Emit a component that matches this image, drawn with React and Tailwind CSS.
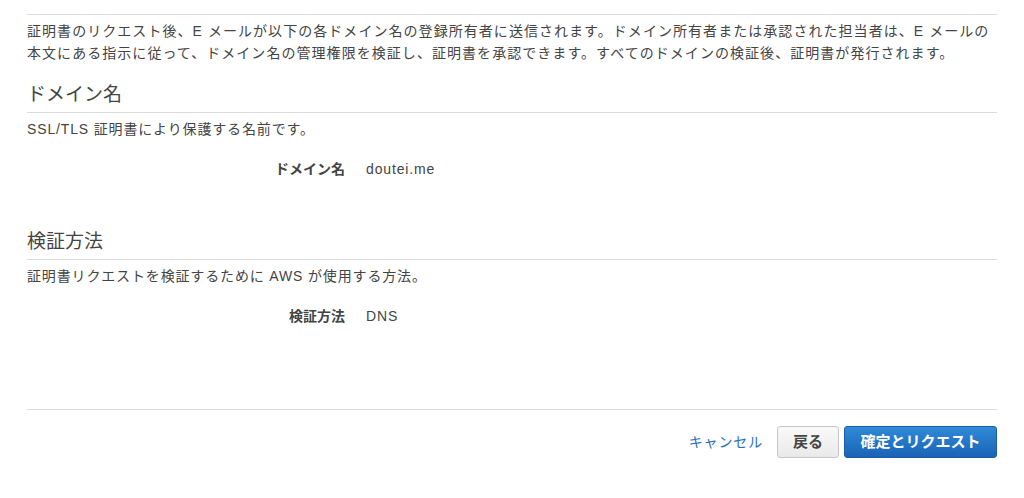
export default function App() {
    return (
        <div className="w-[1024px] h-[498px] bg-white px-[27px] font-['Liberation_Sans','Noto_Sans_CJK_JP',sans-serif] text-[#444]">
            <div className="mt-[14px] border-t border-[#dcdcdc] pt-[5px]">
                <p className="text-[14px] leading-[22px] tracking-[1.05px]">
                    証明書のリクエスト後、E メールが以下の各ドメイン名の登録所有者に送信されます。ドメイン所有者または承認された担当者は、E メールの
                    <br />
                    本文にある指示に従って、ドメイン名の管理権限を検証し、証明書を承認できます。すべてのドメインの検証後、証明書が発行されます。
                </p>
            </div>

            <section>
                <h2 className="mt-[17px] text-[19px] leading-[28px] font-normal pb-[3px] border-b border-[#dcdcdc]">ドメイン名</h2>
                <p className="mt-[5px] text-[14px] leading-[22px] tracking-[0.85px]">SSL/TLS 証明書により保護する名前です。</p>
                <div className="mt-[18px] flex items-center gap-[21px] text-[14px] leading-[22px]">
                    <span className="w-[318px] text-right font-bold">ドメイン名</span>
                    <span className="tracking-[0.85px]">doutei.me</span>
                </div>
            </section>

            <section>
                <h2 className="mt-[48px] text-[19px] leading-[28px] font-normal pb-[3px] border-b border-[#dcdcdc]">検証方法</h2>
                <p className="mt-[5px] text-[14px] leading-[22px] tracking-[0.85px]">証明書リクエストを検証するために AWS が使用する方法。</p>
                <div className="mt-[18px] flex items-center gap-[21px] text-[14px] leading-[22px]">
                    <span className="w-[318px] text-right font-bold">検証方法</span>
                    <span className="tracking-[0.85px]">DNS</span>
                </div>
            </section>

            <div className="mt-[82px] border-t border-[#dcdcdc] pt-[16px] flex items-center justify-end">
                <a className="text-[14px] tracking-[0.85px] text-[#2a6ebb] mr-[14px] cursor-pointer">キャンセル</a>
                <button className="h-[32px] w-[62px] rounded-[3px] border border-[#c6c6c6] bg-gradient-to-b from-[#fafafa] to-[#e9e9e9] text-[15px] font-bold text-[#444]">
                    戻る
                </button>
                <button className="ml-[5px] h-[32px] w-[153px] rounded-[3px] border border-[#1b5ea8] bg-gradient-to-b from-[#2f8ad9] to-[#1b63b6] text-[15px] font-bold text-white">
                    確定とリクエスト
                </button>
            </div>
        </div>
    );
}
